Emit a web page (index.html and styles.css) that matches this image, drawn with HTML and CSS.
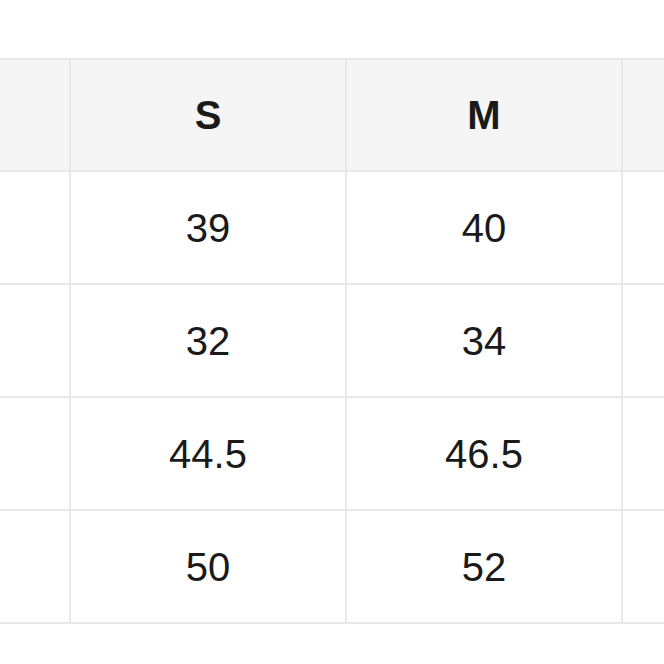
FILE: index.html
```html
<!DOCTYPE html>
<html lang="ko">
<head>
<meta charset="utf-8">
<title>Size table</title>
<link rel="stylesheet" href="styles.css">
</head>
<body>
<div class="size-table">
  <div class="cell head"></div>
  <div class="cell head">S</div>
  <div class="cell head">M</div>
  <div class="cell head"></div>

  <div class="cell"></div>
  <div class="cell">39</div>
  <div class="cell">40</div>
  <div class="cell"></div>

  <div class="cell"></div>
  <div class="cell">32</div>
  <div class="cell">34</div>
  <div class="cell"></div>

  <div class="cell"></div>
  <div class="cell">44.5</div>
  <div class="cell">46.5</div>
  <div class="cell"></div>

  <div class="cell"></div>
  <div class="cell">50</div>
  <div class="cell">52</div>
  <div class="cell"></div>
</div>
</body>
</html>
```
FILE: styles.css
```css
html, body {
  margin: 0;
  padding: 0;
  background: #ffffff;
  overflow: hidden;
}

body {
  width: 664px;
  height: 664px;
  font-family: "Liberation Sans", Arial, sans-serif;
  color: #1a1a1a;
}

.size-table {
  margin-top: 58px;
  display: grid;
  grid-template-columns: 69px 274px 274px 1fr;
  grid-template-rows: 110px repeat(4, 111px);
  gap: 2px;
  padding: 2px 0;
  background: #e8e8e8;
}

.cell {
  background: #ffffff;
  display: flex;
  align-items: center;
  justify-content: center;
  font-size: 40px;
  line-height: 1;
}

.head {
  background: #f5f5f5;
  font-weight: 700;
}
```
